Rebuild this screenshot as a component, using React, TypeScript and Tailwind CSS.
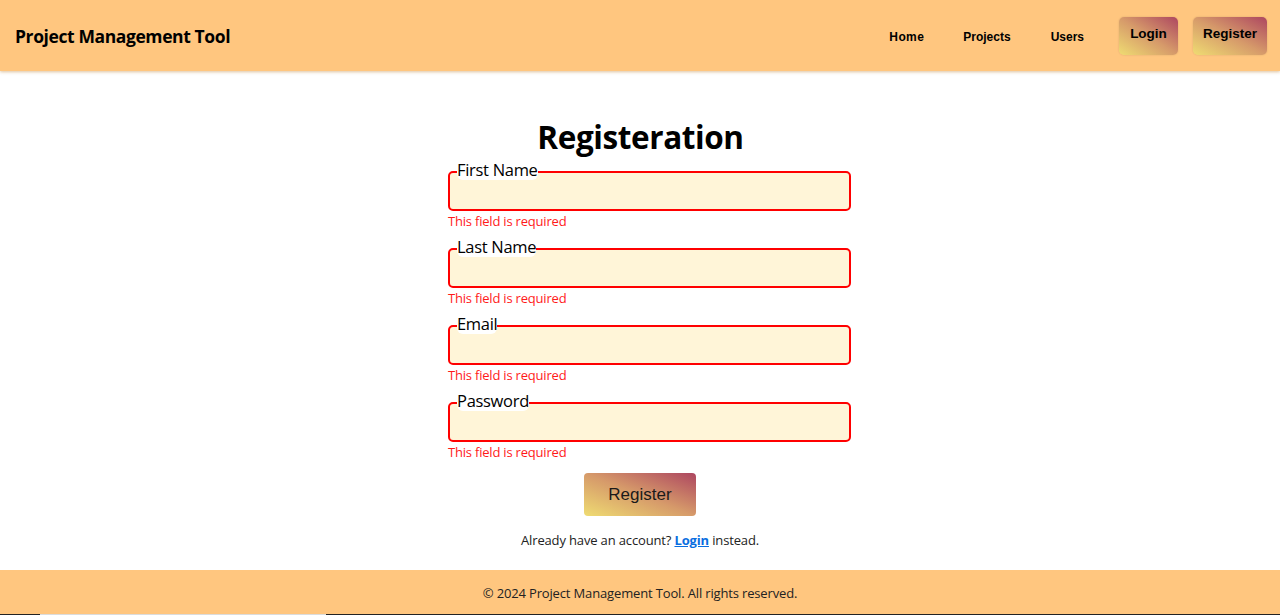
import React from "react";

const grad = "bg-[linear-gradient(to_top_right,#efdc72_0%,#d69a6a_50%,#ad4660_100%)]";

function Field({ label }: { label: string }) {
  return (
    <div className="flex flex-col">
      <div className="relative mt-[12px]">
        <span className="absolute left-[9px] top-[-11px] bg-white rounded-b-[6px] text-[16.5px] leading-[20px] text-black font-['Open_Sans',sans-serif] tracking-[-0.3px]">
          {label}
        </span>
        <input className="block w-[403px] h-[40px] bg-[#fff5d8] border-[2px] border-[#ff0000] rounded-[5px] outline-none" />
      </div>
      <span className="text-[#ff1a1a] text-[13px] leading-[20px] mt-[0px] font-['Open_Sans',sans-serif] tracking-[-0.2px]">
        This field is required
      </span>
    </div>
  );
}

export default function App() {
  return (
    <div className="w-[1280px] h-[615px] flex flex-col bg-white font-['Open_Sans',sans-serif]">
      <header className="h-[71px] shrink-0 bg-[#ffc67f] shadow-[0_1px_3px_rgba(180,120,40,0.45)] flex items-center justify-between pl-[15px] pr-[13px] relative z-10">
        <h1 className="text-[17.5px] font-bold text-black tracking-[-0.4px] mt-[1px]">Project Management Tool</h1>
        <nav className="flex items-center font-['Liberation_Sans',Arial,sans-serif] text-[12px] font-bold text-black">
          <a className="mr-[39px] mt-[3px] tracking-[0.4px]">Home</a>
          <a className="mr-[40px] mt-[3px]">Projects</a>
          <a className="mr-[35px] mt-[3px]">Users</a>
          <button className={`${grad} w-[59px] h-[38px] rounded-[5px] text-[13.5px] font-bold shadow-[0_0_2px_rgba(0,0,0,0.15)] mr-[15px] pb-[3px]`}>Login</button>
          <button className={`${grad} w-[74px] h-[38px] rounded-[5px] text-[13.5px] font-bold shadow-[0_0_2px_rgba(0,0,0,0.15)] pb-[3px]`}>Register</button>
        </nav>
      </header>
      <main className="flex-1 flex flex-col items-center pt-[44px]">
        <h2 className="text-[31.5px] font-bold leading-[44px] text-black tracking-[-0.4px] ml-[1px]">Registeration</h2>
        <div className="flex flex-col mt-[0px] ml-[19px]">
          <Field label="First Name" />
          <div className="h-[5px]" />
          <Field label="Last Name" />
          <div className="h-[5px]" />
          <Field label="Email" />
          <div className="h-[5px]" />
          <Field label="Password" />
        </div>
        <button className={`${grad} mt-[11px] w-[112px] h-[43px] rounded-[4px] font-['Liberation_Sans',Arial,sans-serif] text-[17px] text-[#1a1a1a]`}>
          Register
        </button>
        <p className="mt-[15px] text-[13px] text-[#222] tracking-[-0.15px]">
          Already have an account? <a className="text-[#0a6ee0] font-bold underline">Login</a> instead.
        </p>
      </main>
      <footer className="h-[44px] shrink-0 bg-[#ffc67f] flex items-center justify-center pt-[3px] text-[13px] text-[#222] tracking-[-0.15px]">
        © 2024 Project Management Tool. All rights reserved.
      </footer>
      <div className="h-[1px] shrink-0 flex">
        <div className="w-[40px] bg-[#222]" />
        <div className="w-[286px] bg-[#dcdcdc]" />
        <div className="flex-1 bg-[#222]" />
      </div>
    </div>
  );
}
